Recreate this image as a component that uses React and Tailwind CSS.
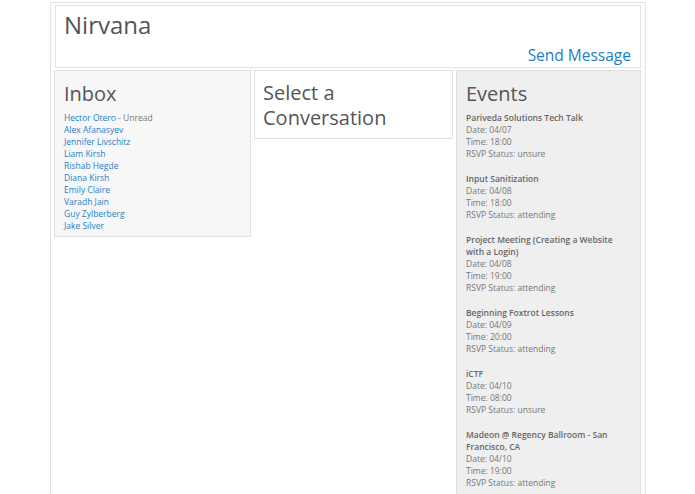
const contacts = [
  "Hector Otero",
  "Alex Afanasyev",
  "Jennifer Livschitz",
  "Liam Kirsh",
  "Rishab Hegde",
  "Diana Kirsh",
  "Emily Claire",
  "Varadh Jain",
  "Guy Zylberberg",
  "Jake Silver",
];

const events = [
  { name: "Pariveda Solutions Tech Talk", date: "04/07", time: "18:00", rsvp: "unsure" },
  { name: "Input Sanitization", date: "04/08", time: "18:00", rsvp: "attending" },
  { name: "Project Meeting (Creating a Website with a Login)", date: "04/08", time: "19:00", rsvp: "attending" },
  { name: "Beginning Foxtrot Lessons", date: "04/09", time: "20:00", rsvp: "attending" },
  { name: "iCTF", date: "04/10", time: "08:00", rsvp: "unsure" },
  { name: "Madeon @ Regency Ballroom - San Francisco, CA", date: "04/10", time: "19:00", rsvp: "attending" },
];

const App = () => {
  return (
    <div className="h-[494px] overflow-hidden bg-white" style={{ fontFamily: '"Open Sans", sans-serif' }}>
      <div className="ml-[50px] mt-[2px] w-[596px] h-[492px] border border-b-0 border-[#e3e3e3] px-[4px] pt-[2px]">
        <div className="border border-[#e3e3e3] h-[63px] pl-[8px] pr-[9px] flex flex-col">
          <h1 className="text-[24px] leading-[36px] text-[#555] mt-[1px]">Nirvana</h1>
          <div className="text-right">
            <a href="#" className="text-[15.5px] leading-[22px] text-[#1b7fc3]">Send Message</a>
          </div>
        </div>

        <div className="flex items-start mt-[2px]">
          <div className="w-[197px] -ml-[1px] bg-[#f7f7f7] border border-[#e0e0e0] px-[9px] pt-[9px] pb-[4px]">
            <h2 className="text-[20px] leading-[28px] text-[#555] mb-[4px]">Inbox</h2>
            <ul className="text-[8.5px] leading-[12px]">
              {contacts.map((c, i) => (
                <li key={c}>
                  <a href="#" className="text-[#2a7fc1]">{c}</a>
                  {i === 0 && <span className="text-[#777]"> - Unread</span>}
                </li>
              ))}
            </ul>
          </div>

          <div className="w-[199px] ml-[3px] border border-[#e0e0e0] px-[8px] pt-[9px] pb-[8px]">
            <h2 className="text-[20px] leading-[25px] text-[#555]">Select a Conversation</h2>
          </div>

          <div className="w-[185px] ml-[3px] h-[430px] bg-[#efefef] border border-[#e0e0e0] px-[9px] pt-[9px]">
            <h2 className="text-[20px] leading-[28px] text-[#555] mb-[4px]">Events</h2>
            {events.map((e) => (
              <div key={e.name} className="text-[8.5px] leading-[12px] text-[#777] mb-[13px]">
                <div className="font-semibold text-[#666]">{e.name}</div>
                <div>Date: {e.date}</div>
                <div>Time: {e.time}</div>
                <div>RSVP Status: {e.rsvp}</div>
              </div>
            ))}
          </div>
        </div>
      </div>
    </div>
  );
};

export default App;
